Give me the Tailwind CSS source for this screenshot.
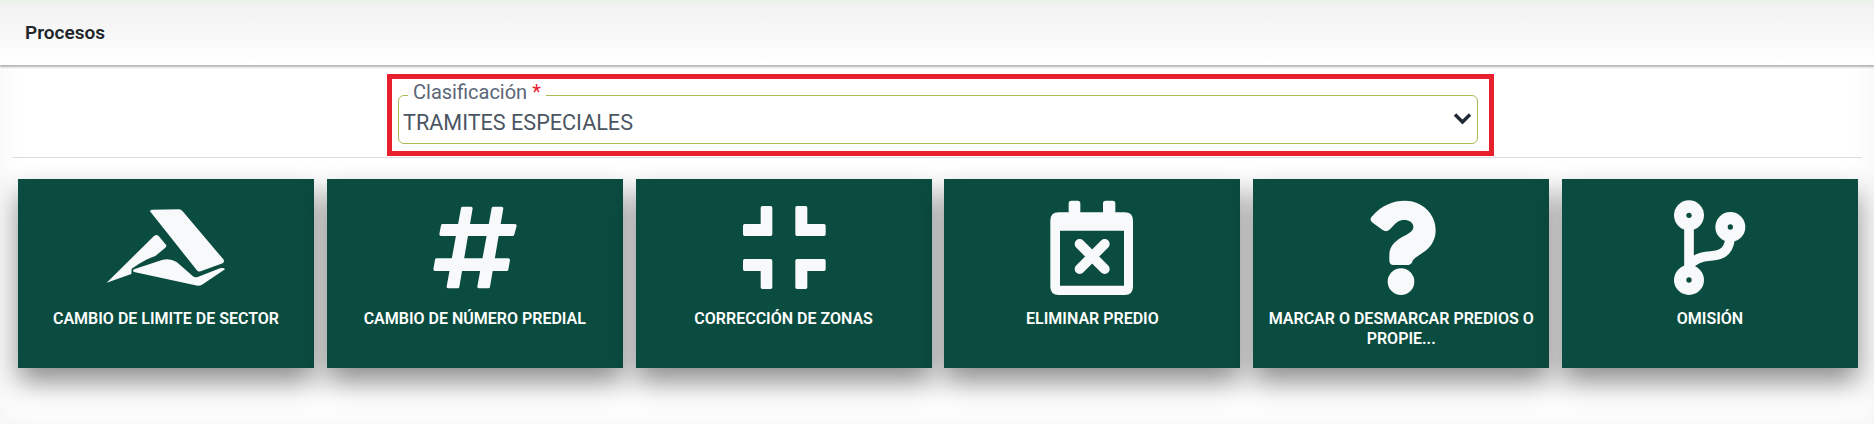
<!DOCTYPE html>
<html lang="es">
<head>
  <meta charset="UTF-8" />
  <title>Procesos</title>
  <script src="https://cdn.jsdelivr.net/npm/@tailwindcss/browser@4"></script>
</head>
<body class="h-[424px] overflow-hidden bg-white font-['Roboto',sans-serif] shadow-[inset_0_0_30px_rgba(0,0,0,0.05)]">
  <div class="h-[3px] bg-[#e6f3e6]"></div>
  <header class="flex h-[62px] items-center bg-gradient-to-b from-[#f1f1f1] to-white px-[25px] pb-[2px] shadow-[0_2px_2px_rgba(0,0,0,0.3)]">
    <h1 class="text-[19px] font-semibold text-[#212529]">Procesos</h1>
  </header>

  <main class="px-3">
    <div class="ml-[375px] mt-[9px] h-[82px] w-[1107px] border-[5px] border-[#e8202e] bg-white pl-[6px] pr-[11px]">
      <fieldset class="relative mt-[1px] h-[64px] rounded-[6px] border border-[#a8bc55] pl-[9px]">
        <legend class="px-[5px] pb-[6px] text-[20px] leading-[24px] text-[#5b6677]">Clasificación <span class="text-[#e8202e]">*</span></legend>
        <div class="-ml-[5px] -mt-[1px] text-[21.6px] leading-[28px] text-[#4b5563]">TRAMITES ESPECIALES</div>
        <svg class="absolute right-[5px] top-[2px] h-[13px] w-[19px]" viewBox="0 0 19 13" fill="none" stroke="#1f2937" stroke-width="3.4"><path d="M2 2.5l7.5 7.5 7.5-7.5" /></svg>
      </fieldset>
    </div>
    <hr class="mt-[1px] border-[#dddddd]" />

    <div class="mt-[21px] grid grid-cols-6 gap-[12.8px] pl-[6px] pr-[4px]">
      <a class="flex h-[189px] flex-col items-center bg-[#0b4c40] px-3 pt-[21px] text-center shadow-[0_14px_26px_rgba(0,0,0,0.45)]">
        <svg class="h-[95px] w-[140px] shrink-0" viewBox="288 90 420 285" fill="#f8f9fb">
          <path d="M450 124 Q450 119 456 119 L536 118 Q544 118 548 124 L670 268 Q675 276 668 280 L602 304 Q594 306 590 300 Z" />
          <path d="M320 338 L462 198 Q470 192 476 198 L499 226 Q500 230 495 234 L466 258 Q440 265 395 296 L394 312 Z" />
          <path d="M402 298 L486 270 Q510 264 530 276 L578 318 Q585 325 595 320 L660 295 Q672 292 675 298 L606 344 Q597 349 586 346 L402 306 Q396 302 402 298 Z" />
        </svg>
        <span class="mt-[14px] text-[16px] font-semibold leading-[20px] text-white">CAMBIO DE LIMITE DE SECTOR</span>
      </a>

      <a class="flex h-[189px] flex-col items-center bg-[#0b4c40] px-3 pt-[21px] text-center shadow-[0_14px_26px_rgba(0,0,0,0.45)]">
        <svg class="h-[95px] w-[100px] shrink-0" viewBox="315 90 300 285" fill="#f8f9fb" stroke="#f8f9fb" stroke-width="10" stroke-linejoin="round">
          <path d="M428 115H453L413 350H385Z" />
          <path d="M520 115H545L505 350H477Z" />
          <path d="M368 167H585L578 193H363Z" />
          <path d="M350 270H565L560 298H345Z" />
        </svg>
        <span class="mt-[14px] text-[16px] font-semibold leading-[20px] text-white">CAMBIO DE NÚMERO PREDIAL</span>
      </a>

      <a class="flex h-[189px] flex-col items-center bg-[#0b4c40] px-3 pt-[21px] text-center shadow-[0_14px_26px_rgba(0,0,0,0.45)]">
        <svg class="h-[95px] w-[100px] shrink-0" viewBox="310 90 300 285" fill="#f8f9fb" stroke="#f8f9fb" stroke-width="10" stroke-linejoin="round">
          <path d="M395 113H420V193H342V167H395Z" />
          <path d="M499 113H525V167H580V193H499Z" />
          <path d="M342 272H420V352H395V298H342Z" />
          <path d="M499 272H580V298H525V352H499Z" />
        </svg>
        <span class="mt-[14px] text-[16px] font-semibold leading-[20px] text-white">CORRECCIÓN DE ZONAS</span>
      </a>

      <a class="flex h-[189px] flex-col items-center bg-[#0b4c40] px-3 pt-[21px] text-center shadow-[0_14px_26px_rgba(0,0,0,0.45)]">
        <svg class="h-[95px] w-[100px] shrink-0" viewBox="307 90 300 285" fill="#f8f9fb">
          <path fill-rule="evenodd" d="M387 100Q387 92 395 92H414Q422 92 422 100V127H490V100Q490 92 498 92H519Q527 92 527 100V127H555Q580 127 580 152V350Q580 375 555 375H357Q332 375 332 350V152Q332 127 357 127H387ZM361 182V347H553V182Z" />
          <path d="M420 222L495 297M495 222L420 297" stroke="#f8f9fb" stroke-width="30" stroke-linecap="round" />
        </svg>
        <span class="mt-[14px] text-[16px] font-semibold leading-[20px] text-white">ELIMINAR PREDIO</span>
      </a>

      <a class="flex h-[189px] flex-col items-center bg-[#0b4c40] px-3 pt-[21px] text-center shadow-[0_14px_26px_rgba(0,0,0,0.45)]">
        <svg class="h-[95px] w-[100px] shrink-0" viewBox="303 90 300 285" fill="#f8f9fb">
          <path d="M365 140C395 105 430 92 465 92C515 92 557 130 557 180C557 225 525 245 505 257C492 265 488 270 487 275C485 282 478 285 470 285L430 285C423 285 418 280 418 272L418 255C418 225 440 210 462 198C480 188 490 182 490 170C490 158 477 150 463 150C447 150 438 157 420 178C412 185 405 185 398 180L368 158C360 152 360 146 365 140Z" />
          <circle cx="453" cy="335" r="40" />
        </svg>
        <span class="mt-[14px] text-[16px] font-semibold leading-[20px] text-white">MARCAR O DESMARCAR PREDIOS O PROPIE...</span>
      </a>

      <a class="flex h-[189px] flex-col items-center bg-[#0b4c40] px-3 pt-[21px] text-center shadow-[0_14px_26px_rgba(0,0,0,0.45)]">
        <svg class="h-[95px] w-[100px] shrink-0" viewBox="318 90 300 285" fill="#f8f9fb">
          <path d="M405 136V330M529 190C529 240 510 255 470 258C440 260 415 270 405 290" fill="none" stroke="#f8f9fb" stroke-width="29" />
          <circle cx="405" cy="136" r="45" />
          <circle cx="529" cy="171" r="45" />
          <circle cx="405" cy="330" r="45" />
          <circle cx="405" cy="136" r="8" fill="#0b4c40" />
          <circle cx="529" cy="171" r="8" fill="#0b4c40" />
          <circle cx="405" cy="330" r="8" fill="#0b4c40" />
        </svg>
        <span class="mt-[14px] text-[16px] font-semibold leading-[20px] text-white">OMISIÓN</span>
      </a>
    </div>
  </main>
</body>
</html>
